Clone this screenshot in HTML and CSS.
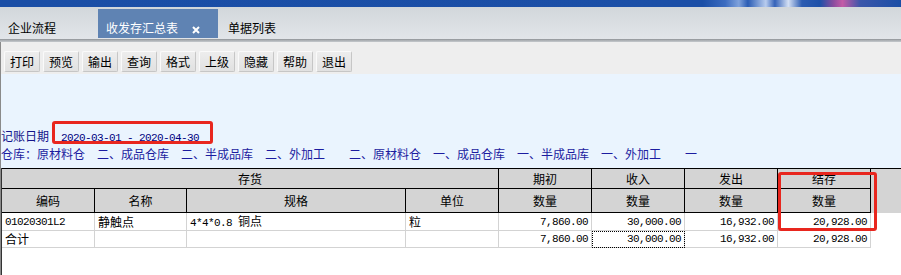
FILE: index.html
```html
<!DOCTYPE html>
<html>
  <head>
    <meta charset="utf-8" />
    <link rel="stylesheet" href="styles.css">
  </head>

  <body class="report-body">
    <div class="report-banner"></div>

    <div class="report-tabs">
      <span class="report-tab">企业流程</span>
      <span class="report-tab report-tab-active">
        收发存汇总表
        <svg class="report-tab-close" width="8" height="8" viewBox="0 0 8 8">
          <path d="M1 1L7 7M7 1L1 7" />
        </svg>
      </span>
      <span class="report-tab report-tab-last">单据列表</span>
    </div>
    <div class="report-tabs-edge"></div>

    <div class="report-workspace">
      <div class="report-toolbar">
        <button class="report-tool-button">打印</button>
        <button class="report-tool-button">预览</button>
        <button class="report-tool-button">输出</button>
        <button class="report-tool-button">查询</button>
        <button class="report-tool-button">格式</button>
        <button class="report-tool-button">上级</button>
        <button class="report-tool-button">隐藏</button>
        <button class="report-tool-button">帮助</button>
        <button class="report-tool-button">退出</button>
      </div>

      <div class="report-filter">
        <div class="report-filter-line">记账日期<span class="report-filter-date">2020-03-01 - 2020-04-30</span></div>
        <div class="report-filter-line report-filter-stores">仓库：原材料仓　二、成品仓库　二、半成品库　二、外加工　　二、原材料仓　一、成品仓库　一、半成品库　一、外加工　　一</div>
        <div class="report-mark report-mark-date"></div>
      </div>

      <div class="report-grid-wrapper">
        <table class="report-grid">
          <colgroup>
            <col class="report-col-code" />
            <col class="report-col-name" />
            <col class="report-col-spec" />
            <col class="report-col-unit" />
            <col class="report-col-qty" />
            <col class="report-col-qty" />
            <col class="report-col-qty" />
            <col class="report-col-qty" />
            <col class="report-col-filler" />
          </colgroup>
          <thead>
            <tr class="report-grid-head-top">
              <th colspan="4">存货</th>
              <th>期初</th>
              <th>收入</th>
              <th>发出</th>
              <th>结存</th>
              <th class="report-grid-filler" rowspan="2"></th>
            </tr>
            <tr class="report-grid-head-sub">
              <th>编码</th>
              <th>名称</th>
              <th>规格</th>
              <th>单位</th>
              <th>数量</th>
              <th>数量</th>
              <th>数量</th>
              <th>数量</th>
            </tr>
          </thead>
          <tbody>
            <tr class="report-grid-row">
              <td class="report-cell-mono">01020301L2</td>
              <td>静触点</td>
              <td><span class="report-cell-mono">4*4*0.8 </span>铜点</td>
              <td>粒</td>
              <td class="report-cell-num">7,860.00</td>
              <td class="report-cell-num">30,000.00</td>
              <td class="report-cell-num">16,932.00</td>
              <td class="report-cell-num">20,928.00</td>
            </tr>
            <tr class="report-grid-row report-grid-total">
              <td>合计</td>
              <td></td>
              <td></td>
              <td></td>
              <td class="report-cell-num">7,860.00</td>
              <td class="report-cell-num report-cell-focus">30,000.00</td>
              <td class="report-cell-num">16,932.00</td>
              <td class="report-cell-num">20,928.00</td>
            </tr>
          </tbody>
        </table>
        <div class="report-mark report-mark-balance"></div>
      </div>
    </div>
  </body>
</html>
```

FILE: styles.css
```css
:root {
  --font: "Noto Sans CJK SC", "Noto Sans", sans-serif;
  --mono: "Liberation Mono", "DejaVu Sans Mono", monospace;
  --head-bg: #d4d4d4;
  --grid-line: #d3d3d3;
  --mark-red: #e8261e;
  --filter-text: #14148a;
}

body {
  font-family: var(--font);
}

.report-body {
  margin: 0;
  width: 901px;
  height: 275px;
  overflow: hidden;
  font-size: 12px;
  color: #000;
  background: #ffffff;
}

.report-banner {
  height: 7px;
  background: linear-gradient(90deg, #1a4ea6 0%, #1b4fa7 78%, #3c6cc0 80.5%, #7fa2dc 82%, #2a5cb4 83%,
    #b8ccee 85%, #3462b8 86%, #d4e0f4 87.5%, #2c5cb2 89%, #1d50a8 91%, #8a4c9e 92.5%, #c45aa6 93.5%,
    #3a56aa 95.5%, #1a4ea6 100%);
}

.report-tabs {
  display: flex;
  height: 32px;
  background: linear-gradient(#d2d7db, #e2e5e9);
}

.report-tabs-edge {
  height: 3px;
  background: linear-gradient(#8d9195, #a9adb1 40%, #c5c9cd);
}

.report-tab {
  box-sizing: border-box;
  width: 98px;
  padding: 14px 0 0 8px;
  line-height: 14px;
  font-size: 12px;
  color: #000;
}

.report-tab-active {
  width: 120px;
  height: 29px;
  margin-top: 2px;
  padding-top: 12px;
  color: #ffffff;
  background-color: #5f83b3;
}

.report-tab-last {
  width: auto;
  padding-left: 10px;
}

.report-tab-close {
  margin-left: 11px;
  vertical-align: -1px;
  stroke: #ffffff;
  stroke-width: 2;
}

.report-workspace {
  border-left: 1px solid #8a8a8a;
}

.report-toolbar {
  box-sizing: border-box;
  display: flex;
  gap: 3px;
  height: 32px;
  padding: 9px 0 0 3px;
  background-color: #eeeeee;
}

.report-tool-button {
  box-sizing: border-box;
  width: 36px;
  height: 21px;
  margin: 0;
  padding: 0;
  font-family: var(--font);
  font-size: 12px;
  line-height: 19px;
  color: #000;
  border: 1px solid;
  border-color: #fafafa #c6c6c6 #c6c6c6 #fafafa;
  border-radius: 2px;
  background: linear-gradient(#ededed, #e1e1e1);
}

.report-filter {
  position: relative;
  box-sizing: border-box;
  display: flex;
  flex-direction: column;
  justify-content: flex-end;
  height: 94px;
  padding-bottom: 6px;
  background-color: #eaf4fe;
  color: var(--filter-text);
}

.report-filter-line {
  line-height: 16px;
  white-space: nowrap;
}

.report-filter-stores {
  white-space: pre;
  color: #1c1ca0;
}

.report-filter-date {
  margin-left: 12px;
  font-family: var(--mono);
  font-size: 11px;
  letter-spacing: -0.6px;
  color: #000080;
}

.report-mark {
  position: absolute;
  box-sizing: border-box;
  border: 3px solid var(--mark-red);
  border-radius: 3px;
}

.report-mark-date {
  left: 51px;
  top: 47px;
  width: 161px;
  height: 23px;
}

.report-grid-wrapper {
  position: relative;
  height: 107px;
  border-left: 1px solid #333333;
  background-color: #ffffff;
}

.report-grid {
  table-layout: fixed;
  width: 899px;
  border-collapse: separate;
  border-spacing: 0;
  border-top: 1px solid #000;
}

.report-col-code {
  width: 93px;
}

.report-col-name {
  width: 92px;
}

.report-col-spec {
  width: 219px;
}

.report-col-unit {
  width: 93px;
}

.report-col-qty {
  width: 93px;
}

.report-col-filler {
  width: 30px;
}

.report-grid th {
  padding: 0;
  font-weight: normal;
  text-align: center;
  background-color: var(--head-bg);
  border-right: 1px solid #000;
  border-bottom: 1px solid #000;
}

.report-grid .report-grid-filler {
  border-right: 0;
  border-bottom: 0;
}

.report-grid-head-top {
  height: 20px;
}

.report-grid-head-sub {
  height: 24px;
}

.report-grid td {
  padding: 0 0 0 3px;
  line-height: 14px;
  white-space: nowrap;
  border-right: 1px solid var(--grid-line);
  border-bottom: 1px solid var(--grid-line);
}

.report-grid-row {
  height: 18px;
}

.report-grid-total {
  height: 17px;
}

.report-cell-mono {
  font-family: var(--mono);
  font-size: 11px;
  letter-spacing: -0.6px;
}

.report-grid td.report-cell-num {
  padding: 0 3px 0 0;
  text-align: right;
  font-family: var(--mono);
  font-size: 11px;
  letter-spacing: -0.6px;
}

.report-cell-focus {
  outline: 1px dotted #000;
  outline-offset: -1px;
}

.report-mark-balance {
  left: 776px;
  top: 4px;
  width: 99px;
  height: 59px;
}
```
